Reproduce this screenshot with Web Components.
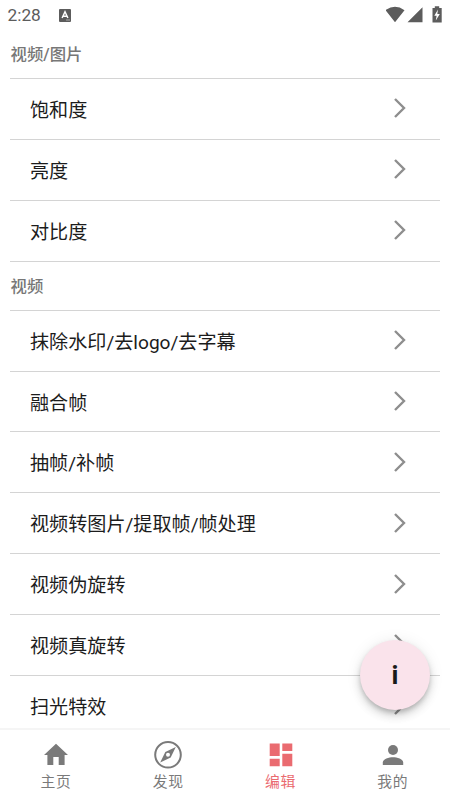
<!DOCTYPE html>
<html lang="zh-CN">
<head>
<meta charset="utf-8">
<title>编辑</title>
<style>
html,body{margin:0;height:100%;overflow:hidden;background:#fff}
body{font-family:Roboto,"Noto Sans CJK SC",sans-serif;color:#1c1c1c}
</style>
</head>
<body>
<edit-app></edit-app>
<script>
const define = (name, html) => customElements.define(name, class extends HTMLElement {
  constructor() {
    super();
    const t = document.createElement('template');
    t.innerHTML = html;
    this.attachShadow({mode: 'open'}).append(t.content.cloneNode(true));
  }
});

define('status-bar', `<style>
:host{display:flex;align-items:center;height:29.8px;flex:none;box-sizing:border-box;padding:1px 8px 0 7.5px;color:#5c5c5c;font-size:17.3px}
.space{flex:1}
svg{display:block;flex:none;fill:#5c5c5c}
.app{margin-left:18px}
</style>
<span>2:28</span>
<svg class="app" width="12" height="13" viewBox="0 0 12 13"><rect width="12" height="13" rx="1"/><path d="M3.1 9 6 2.8 8.9 9M4.2 7.2h3.6" fill="none" stroke="#fff" stroke-width="1.5"/><path d="M7 11h4" stroke="#aaa" stroke-width="1"/></svg>
<span class="space"></span>
<svg width="56" height="18" viewBox="386 6 56 18"><path d="M385.5 10.2Q395 3.3 404.500 10.2L395 22.300ZM407.500 22.300 422.500 7.300V22.300ZM432.500 8h2.300V6.200h4.400V8H441.700V22.500H432.500Z" /><path d="M438 9.500 434.300 15.800H436.600L435.800 20.500 439.800 14.100H437.300Z" fill="#fff"/></svg>`);

define('section-title', `<style>
:host{display:flex;align-items:center;height:49.2px;flex:none;box-sizing:border-box;padding:0 0 1px .5px;border-bottom:1px solid #d4d4d4;font-size:16.4px;color:#777;font-weight:500}
</style><slot></slot>`);

define('list-row', `<style>
:host{display:flex;align-items:center;justify-content:space-between;height:60.87px;flex:none;box-sizing:border-box;padding:0 34px 0 20px;border-bottom:1px solid #d4d4d4;font-size:19.1px}
svg{display:block;fill:none;stroke:#8e8e8e;stroke-width:2.4;margin-bottom:1px}
</style><span><slot></slot></span>
<svg width="12" height="20" viewBox="0 0 12 20"><path d="M1 1 10 10 1 19"/></svg>`);

define('round-button', `<style>
:host{position:absolute;left:360px;top:640px;width:70px;height:70px;border-radius:50%;background:#fae3eb;display:flex;align-items:center;justify-content:center;box-shadow:0 3px 5px -1px #0003,0 6px 10px #00000024,0 1px 16px #00000014;font-size:26px;font-weight:700;color:#1a1a1a}
</style><span><slot></slot></span>`);

define('nav-item', `<style>
:host{display:flex;flex-direction:column;align-items:center;flex:1;color:#7a7a7a;font-size:14.8px;letter-spacing:.8px;padding-top:11px}
:host([active]){color:#ea6b70}
::slotted(svg){display:block;width:30px;height:30px;fill:currentColor}
span{line-height:22px}
</style><slot name="icon"></slot><span><slot></slot></span>`);

define('bottom-nav', `<style>
:host{display:flex;height:72px;flex:none;box-sizing:border-box;border-top:2px solid #f5f5f5;background:#fff;position:relative;padding-right:1px}
</style>
<nav-item><svg slot="icon" viewBox="0 0 30 30"><path d="M15 2.800 27 14H23.600V24H17.700V16H12.300V24H6.400V14H3Z"/></svg>主页</nav-item>
<nav-item><svg slot="icon" viewBox="0 0 30 30"><circle cx="15" cy="13.800" r="12.800" fill="none" stroke="currentColor" stroke-width="2"/><path fill-rule="evenodd" d="M22.800 6 17.700 16.500 7.200 21.600 12.300 11.100ZM15 11.800A2 2 0 1 0 15 15.800A2 2 0 1 0 15 11.800Z"/></svg>发现</nav-item>
<nav-item active><svg slot="icon" viewBox="0 0 30 30"><path d="M3.700 2.500H13.700V15H3.700ZM16.300 2.500H26.300V10H16.300ZM3.700 17.700H13.700V25.200H3.700ZM16.300 12.700H26.300V25.200H16.300Z"/></svg>编辑</nav-item>
<nav-item><svg slot="icon" viewBox="0 0 30 30"><circle cx="15" cy="9" r="5"/><path d="M4.800 24V21.500C4.800 18 11 16.300 15 16.300S25.200 18 25.200 21.500V24Z"/></svg>我的</nav-item>`);

define('edit-app', `<style>
:host{display:flex;flex-direction:column;width:450px;height:800px;position:relative;overflow:hidden;background:#fff}
main{flex:1;min-height:0;overflow:hidden;display:flex;flex-direction:column;padding:0 10px}
</style>
<status-bar></status-bar>
<main>
<section-title>视频/图片</section-title>
<list-row>饱和度</list-row>
<list-row>亮度</list-row>
<list-row>对比度</list-row>
<section-title>视频</section-title>
<list-row>抹除水印/去logo/去字幕</list-row>
<list-row>融合帧</list-row>
<list-row>抽帧/补帧</list-row>
<list-row>视频转图片/提取帧/帧处理</list-row>
<list-row>视频伪旋转</list-row>
<list-row>视频真旋转</list-row>
<list-row>扫光特效</list-row>
</main>
<round-button>i</round-button>
<bottom-nav></bottom-nav>`);
</script>
</body>
</html>
